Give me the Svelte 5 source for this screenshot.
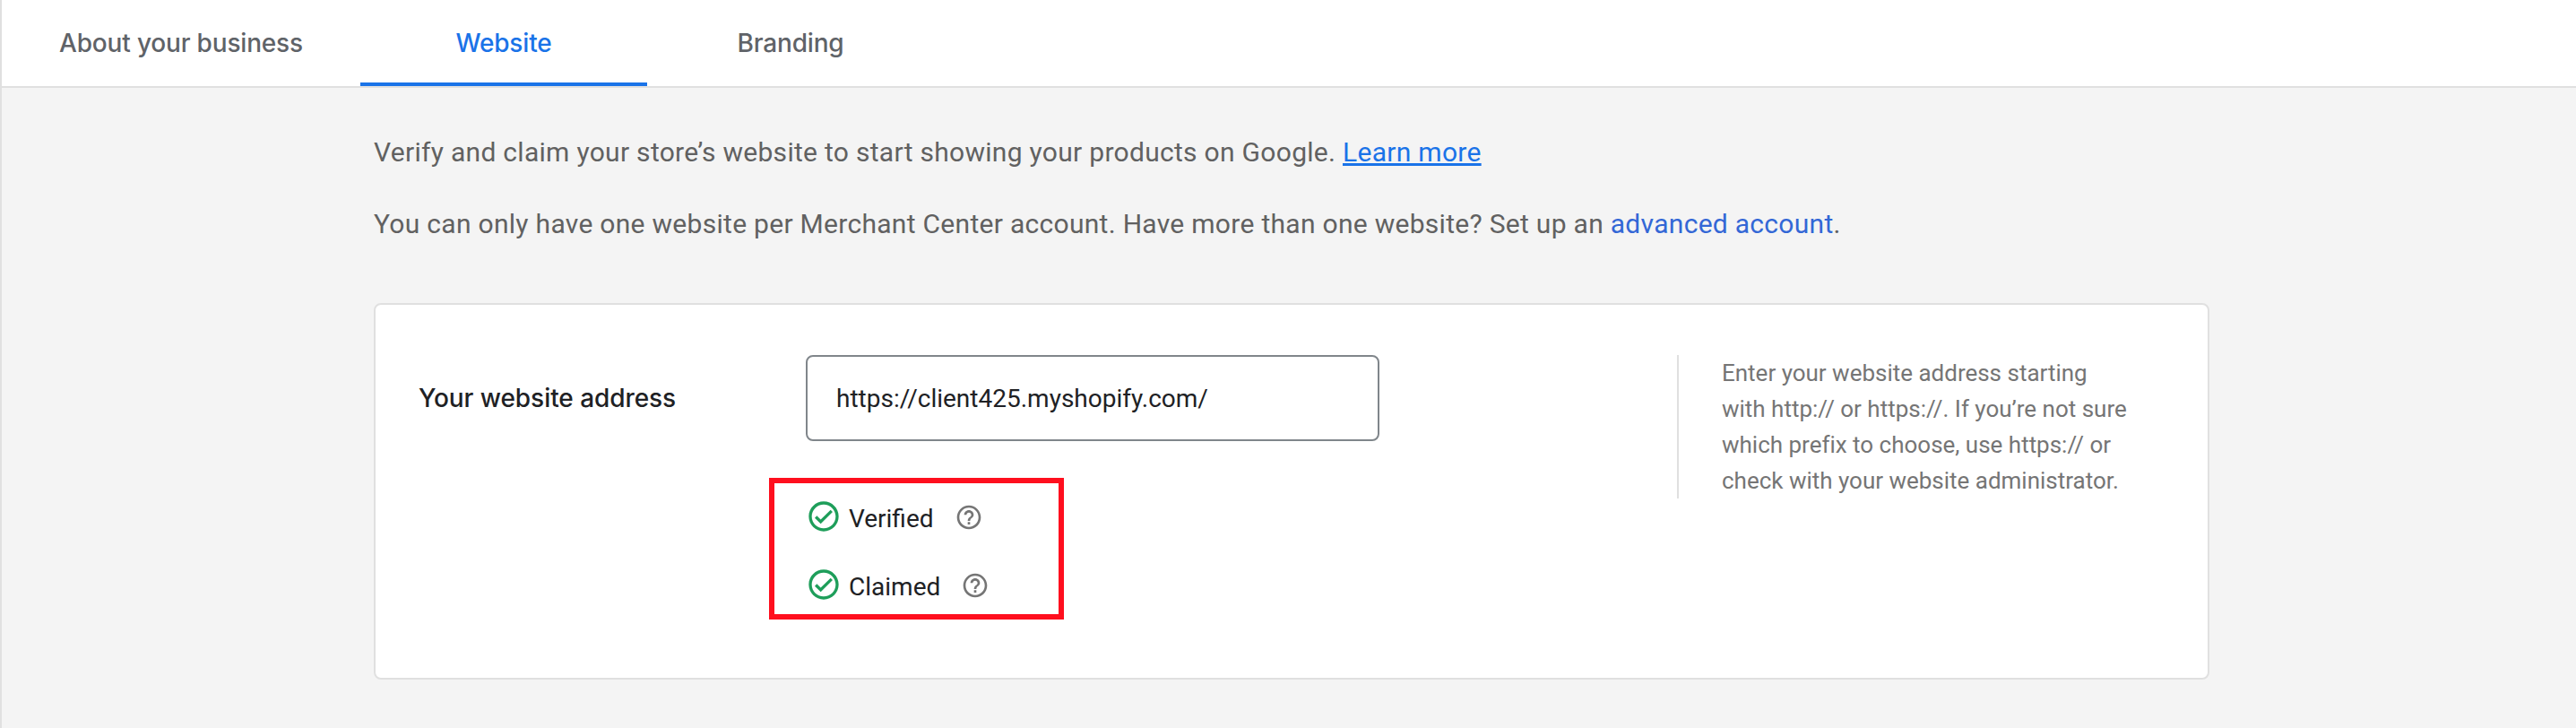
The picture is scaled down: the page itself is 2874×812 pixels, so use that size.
<script>
  const tabs = [
    { label: 'About your business', active: false },
    { label: 'Website', active: true },
    { label: 'Branding', active: false }
  ];
  const statuses = ['Verified', 'Claimed'];
</script>

<div class="page">
  <nav class="tabs">
    {#each tabs as tab}
      <div class="tab" class:active={tab.active}>{tab.label}</div>
    {/each}
  </nav>
  <main>
    <p class="intro">Verify and claim your store’s website to start showing your products on Google. <a class="learn" href="#learn">Learn more</a></p>
    <p class="intro">You can only have one website per Merchant Center account. Have more than one website? Set up an <a class="advanced" href="#advanced">advanced account</a>.</p>
    <section class="card">
      <h2>Your website address</h2>
      <div class="field">
        <div class="input">https://client425.myshopify.com/</div>
        <div class="statuses">
          {#each statuses as status}
            <div class="status">
              <svg class="check" viewBox="0 0 24 24"><path d="M16.59 7.58L10 14.17l-2.59-2.58L6 13l4 4 8-8-1.41-1.42zM12 2C6.48 2 2 6.48 2 12s4.48 10 10 10 10-4.48 10-10S17.52 2 12 2zm0 18c-4.42 0-8-3.58-8-8s3.58-8 8-8 8 3.58 8 8-3.58 8-8 8z" /></svg>
              <span>{status}</span>
              <svg class="help" viewBox="0 0 24 24"><path d="M11 18h2v-2h-2v2zm1-16C6.48 2 2 6.48 2 12s4.48 10 10 10 10-4.48 10-10S17.52 2 12 2zm0 18c-4.41 0-8-3.59-8-8s3.59-8 8-8 8 3.59 8 8-3.59 8-8 8zm0-14c-2.21 0-4 1.79-4 4h2c0-1.1.9-2 2-2s2 .9 2 2c0 2-3 1.75-3 5h2c0-2.25 3-2.5 3-5 0-2.21-1.79-4-4-4z" /></svg>
            </div>
          {/each}
        </div>
      </div>
      <aside>
        Enter your website address starting<br />with http:// or https://. If you’re not sure<br />which prefix to choose, use https:// or<br />check with your website administrator.
      </aside>
    </section>
  </main>
</div>

<style>
  .page {
    box-sizing: border-box;
    width: 2874px;
    height: 812px;
    overflow: hidden;
    border-left: 2px solid #e0e0e0;
    background: #f4f4f4;
    font-family: Roboto, sans-serif;
  }
  .tabs {
    display: flex;
    height: 96px;
    background: #fff;
    border-bottom: 2px solid #e0e0e0;
  }
  .tab {
    box-sizing: border-box;
    width: 320px;
    padding-top: 4px;
    display: flex;
    align-items: center;
    justify-content: center;
    border-bottom: 4px solid transparent;
    color: #5f6368;
    font: 500 28px/36px Inter, sans-serif;
    letter-spacing: -0.18px;
    white-space: nowrap;
  }
  .tab:first-child { width: 400px; }
  .tab.active {
    color: #1a73e8;
    border-bottom-color: #1a73e8;
  }
  main { padding: 50px 0 0 415px; }
  .intro {
    margin: 0 0 36px;
    height: 44px;
    font-size: 30px;
    line-height: 44px;
    letter-spacing: 0.29px;
    color: #616161;
    white-space: nowrap;
  }
  .learn {
    color: #1a73e8;
    text-decoration: underline;
    text-decoration-thickness: 3px;
    text-underline-offset: 2px;
    text-decoration-skip-ink: none;
  }
  .advanced { color: #3367d6; text-decoration: none; }
  .card {
    box-sizing: border-box;
    display: grid;
    grid-template-columns: 432px 972px 1fr;
    align-items: start;
    width: 2048px;
    height: 420px;
    margin-top: 66px;
    padding: 56px 48px;
    border: 2px solid #e0e0e0;
    border-radius: 8px;
    background: #fff;
  }
  h2 {
    margin: 0;
    font: 500 28px/96px Inter, sans-serif;
    letter-spacing: -0.06px;
    color: #202124;
    white-space: nowrap;
  }
  .input {
    box-sizing: border-box;
    width: 640px;
    height: 96px;
    padding: 0 32px;
    border: 2px solid #80868b;
    border-radius: 8px;
    font-size: 28px;
    line-height: 93px;
    color: #202124;
  }
  .statuses {
    box-sizing: border-box;
    width: 329px;
    height: 158px;
    margin: 41px 0 0 -41px;
    padding: 17px 0 0 35px;
    border: 6px solid #ff0f1e;
  }
  .status {
    display: flex;
    height: 76px;
    font-size: 28px;
    line-height: 45px;
    color: #202124;
  }
  .check { width: 40px; height: 40px; margin-right: 8px; fill: #1e9e5a; }
  .help { width: 32px; height: 32px; margin: 5px 0 0 23px; fill: #757575; }
  aside {
    height: 160px;
    padding-left: 48px;
    border-left: 2px solid #e0e0e0;
    font-size: 26px;
    line-height: 40px;
    letter-spacing: -0.01px;
    color: #757575;
    white-space: nowrap;
  }
</style>
